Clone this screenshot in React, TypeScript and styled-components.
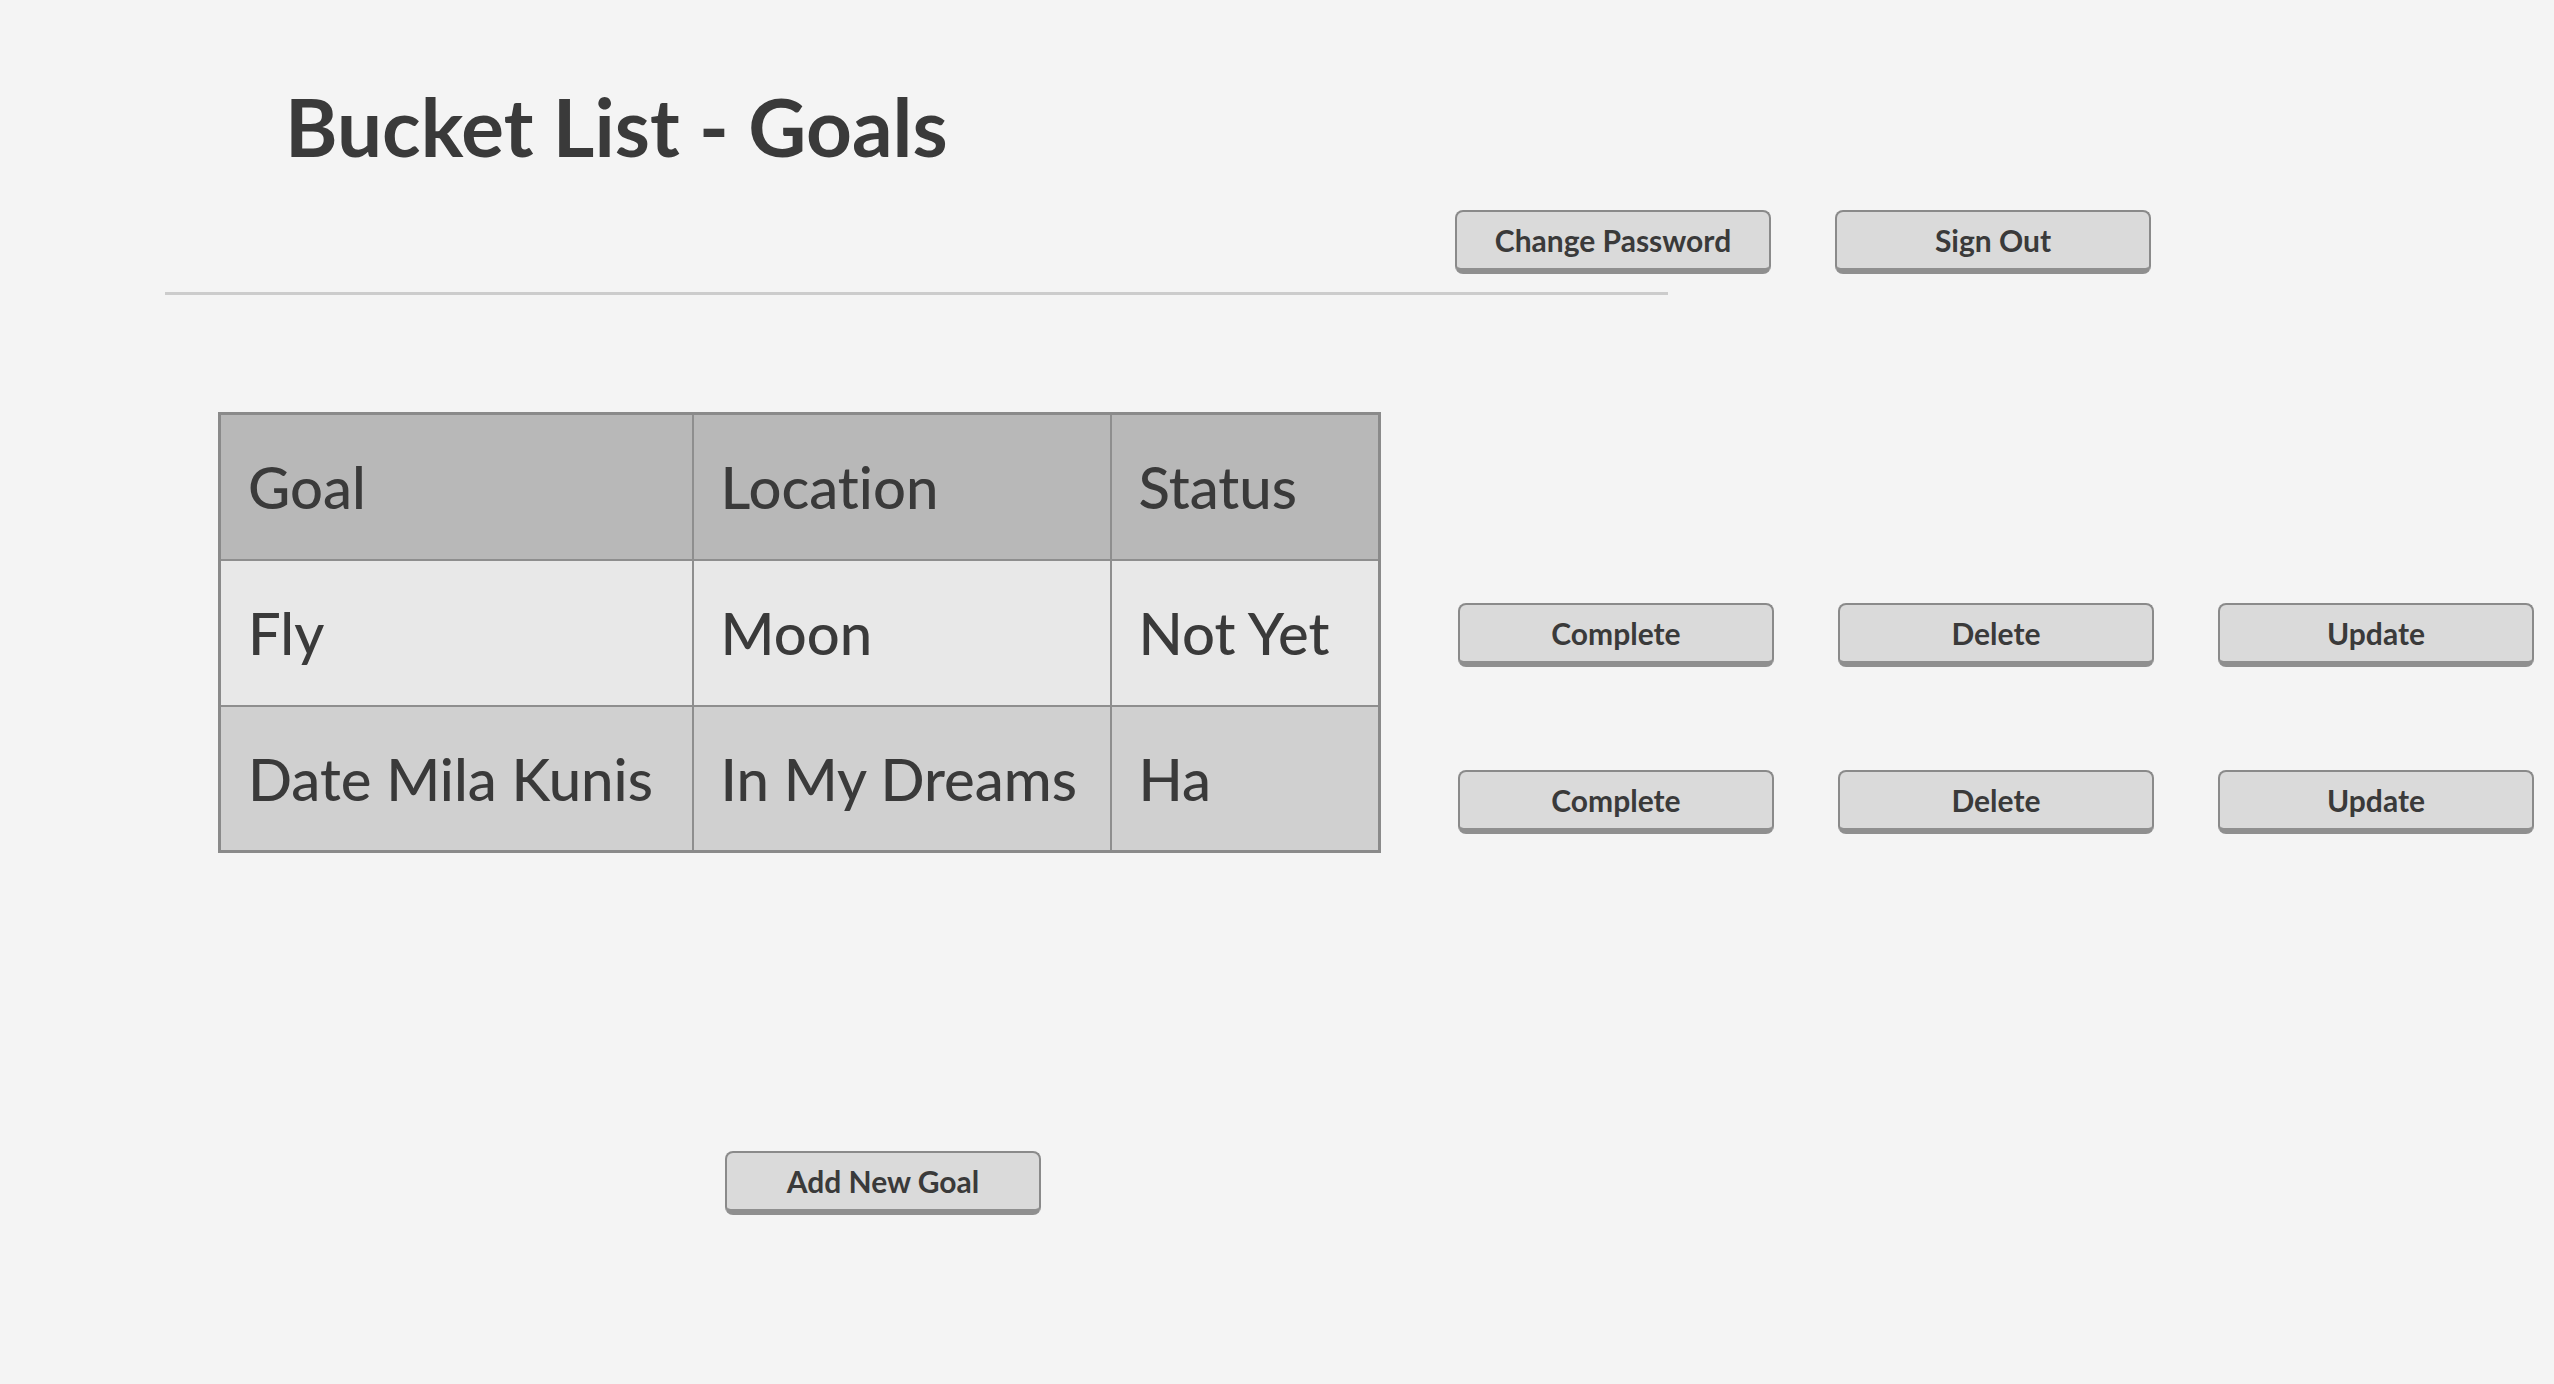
import styled, { createGlobalStyle } from 'styled-components';

const GlobalStyle = createGlobalStyle`
  body {
    margin: 0;
    background: #f4f4f4;
    font-family: Lato, 'Open Sans', sans-serif;
    font-variant-ligatures: none;
    font-feature-settings: "liga" 0, "clig" 0, "dlig" 0, "calt" 0;
    color: #3a3a3a;
  }
`;

const Page = styled.div`
  width: 2554px;
  min-height: 1384px;
  display: flex;
  flex-direction: column;
`;

const Header = styled.header`
  padding: 86px 0 0 285px;
`;

const Title = styled.h1`
  margin: 0;
  font-size: 80px;
  line-height: 1;
  font-weight: 700;
`;

const NavBar = styled.nav`
  display: flex;
  gap: 64px;
  margin: 44px 0 0 1455px;
`;

const Rule = styled.hr`
  margin: 18px 0 0 165px;
  width: 1503px;
  height: 3px;
  border: none;
  background: #cccccc;
`;

const Content = styled.main`
  display: flex;
  align-items: flex-start;
  margin: 117px 0 0 218px;
`;

const Table = styled.table`
  border-collapse: collapse;
  border: 3px solid #8a8a8a;
`;

const Cell = styled.td<{ $width?: number }>`
  width: ${(p) => (p.$width ? `${p.$width}px` : 'auto')};
  height: 146px;
  padding: 0 0 0 27px;
  box-sizing: border-box;
  border: 2px solid #8e8e8e;
  font-size: 58px;
  font-weight: 500;
  white-space: nowrap;
  font-feature-settings: "liga" 0, "clig" 0, "dlig" 0, "calt" 0;
`;

const HeadCell = styled(Cell).attrs({ as: 'th' })`
  text-align: left;
`;

const Row = styled.tr<{ $tone: string }>`
  background: ${(p) => p.$tone};
`;

const Actions = styled.div`
  display: flex;
  flex-direction: column;
  gap: 103px;
  margin: 191px 0 0 77px;
`;

const ActionRow = styled.div`
  display: flex;
  gap: 64px;
`;

const Button = styled.button`
  width: 316px;
  height: 64px;
  box-sizing: border-box;
  background: #dadada;
  border: 2px solid #8a8a8a;
  border-bottom: 6px solid #8f8f8f;
  border-radius: 8px;
  font-family: Lato, 'Open Sans', sans-serif;
  font-size: 30px;
  font-weight: 700;
  color: #3a3a3a;
  padding: 0;
  cursor: pointer;
`;

const Footer = styled.div`
  margin: 298px 0 0 725px;
`;

interface Goal {
  id: number;
  goal: string;
  location: string;
  status: string;
}

const goals: Goal[] = [
  { id: 1, goal: 'Fly', location: 'Moon', status: 'Not Yet' },
  { id: 2, goal: 'Date Mila Kunis', location: 'In My Dreams', status: 'Ha' },
];

const tones = ['#e8e8e8', '#d0d0d0'];

function App() {
  return (
    <Page>
      <GlobalStyle />
      <Header>
        <Title>Bucket List - Goals</Title>
      </Header>
      <NavBar>
        <Button>Change Password</Button>
        <Button>Sign Out</Button>
      </NavBar>
      <Rule />
      <Content>
        <Table>
          <thead>
            <Row $tone="#b8b8b8">
              <HeadCell $width={473}>Goal</HeadCell>
              <HeadCell $width={418}>Location</HeadCell>
              <HeadCell $width={269}>Status</HeadCell>
            </Row>
          </thead>
          <tbody>
            {goals.map((g, i) => (
              <Row key={g.id} $tone={tones[i % 2]}>
                <Cell>{g.goal}</Cell>
                <Cell>{g.location}</Cell>
                <Cell>{g.status}</Cell>
              </Row>
            ))}
          </tbody>
        </Table>
        <Actions>
          {goals.map((g) => (
            <ActionRow key={g.id}>
              <Button>Complete</Button>
              <Button>Delete</Button>
              <Button>Update</Button>
            </ActionRow>
          ))}
        </Actions>
      </Content>
      <Footer>
        <Button>Add New Goal</Button>
      </Footer>
    </Page>
  );
}

export default App;
